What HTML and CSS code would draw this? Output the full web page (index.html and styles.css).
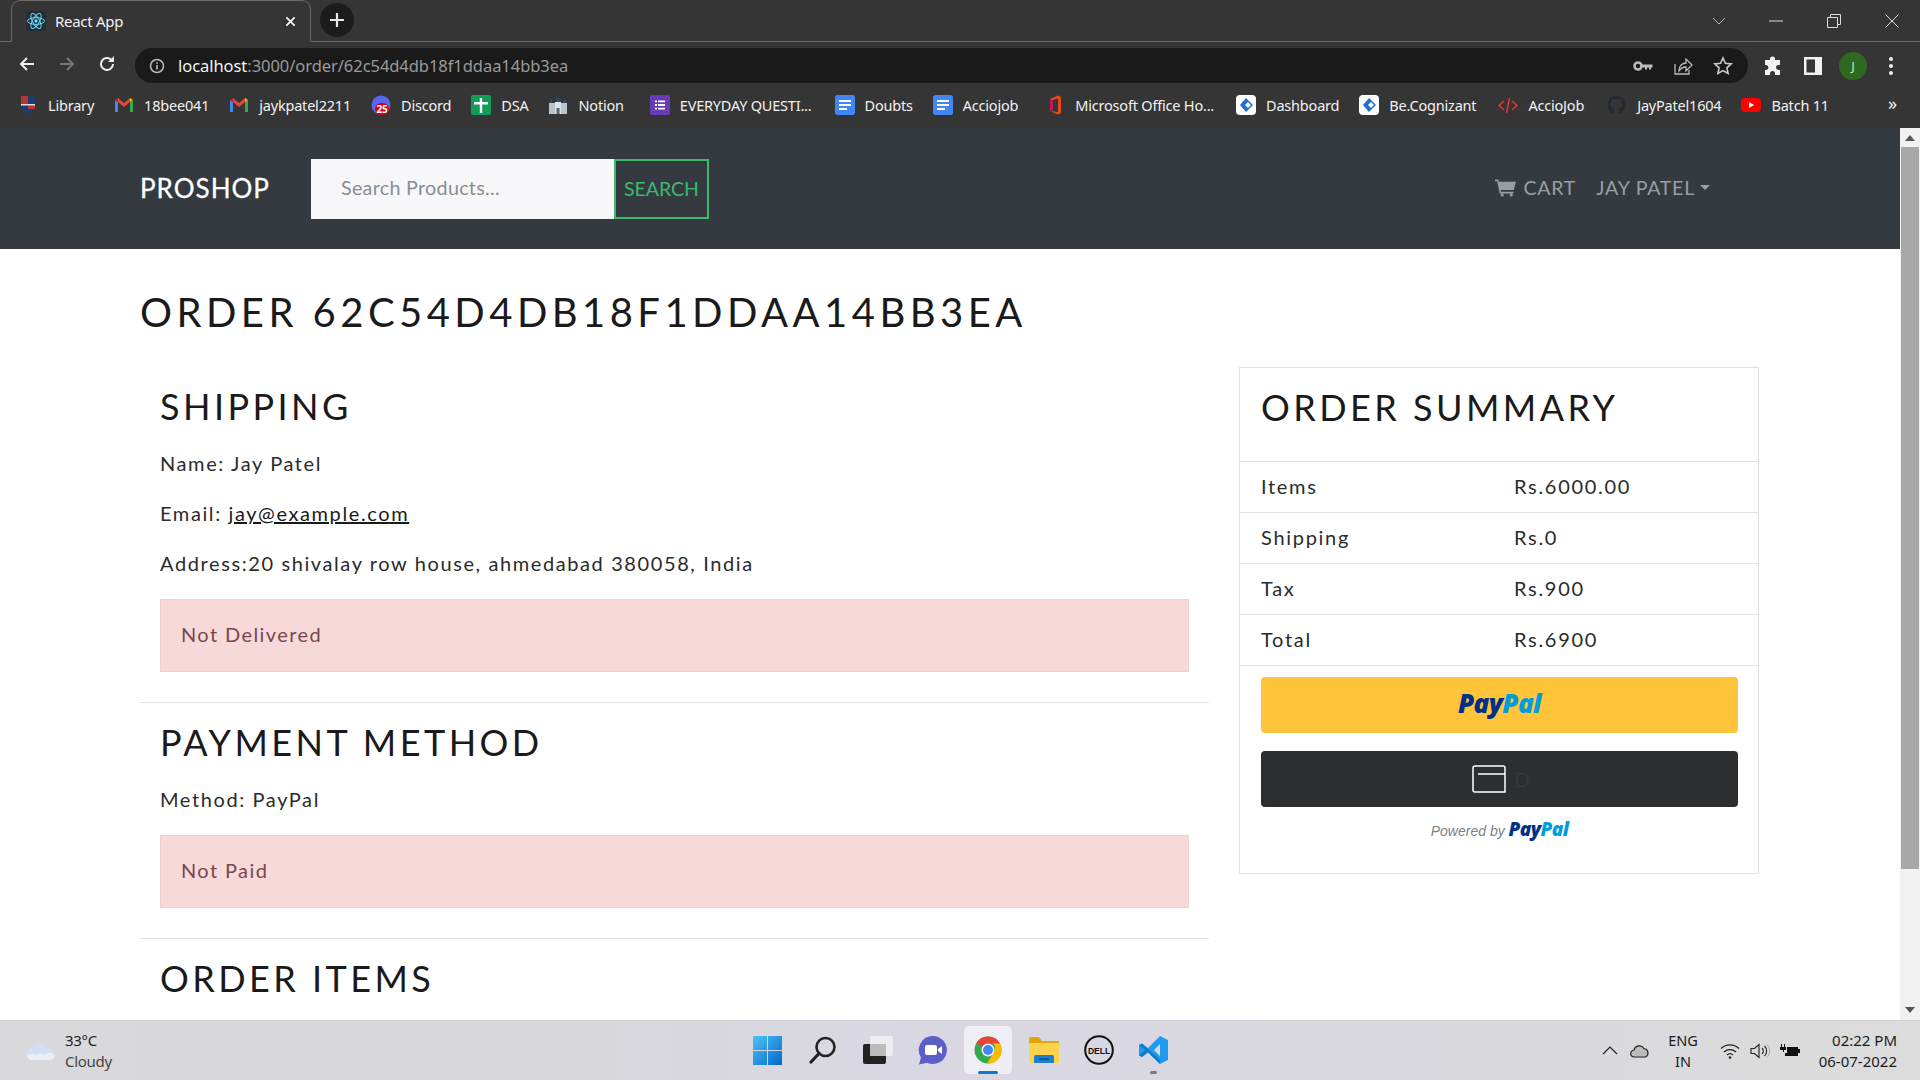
FILE: index.html
```html
<!DOCTYPE html>
<html lang="en">
<head>
<meta charset="utf-8">
<title>React App</title>
<link rel="stylesheet" href="styles.css">
</head>
<body>
<header class="chrome">
  <div class="tabstrip">
    <div class="tab">
      <svg class="fav" viewBox="0 0 20 20"><rect width="20" height="20" rx="3" fill="#282c34"/><g fill="none" stroke="#61dafb" stroke-width="1"><ellipse cx="10" cy="10" rx="8.5" ry="3.4"/><ellipse cx="10" cy="10" rx="8.5" ry="3.4" transform="rotate(60 10 10)"/><ellipse cx="10" cy="10" rx="8.5" ry="3.4" transform="rotate(120 10 10)"/></g><circle cx="10" cy="10" r="1.7" fill="#61dafb"/></svg>
      <span class="tabtitle">React App</span>
      <svg class="tabclose" viewBox="0 0 12 12"><path d="M1.5 1.5l9 9M10.5 1.5l-9 9" stroke="#fff" stroke-width="1.8"/></svg>
    </div>
    <div class="newtab"><svg viewBox="0 0 16 16" width="16" height="16"><path d="M8 1v14M1 8h14" stroke="#e8e8e8" stroke-width="2.2"/></svg></div>
    <div class="winbtns">
      <svg class="w1" viewBox="0 0 14 8" width="14" height="8"><path d="M1 1l6 6 6-6" fill="none" stroke="#bbb" stroke-width="1"/></svg>
      <svg class="w2" viewBox="0 0 14 2" width="14" height="2"><path d="M0 1h14" stroke="#ddd" stroke-width="1"/></svg>
      <svg class="w3" viewBox="0 0 14 14" width="14" height="14"><path d="M.5 3.5h10v10H.5zM3.5 3V.5h10v10H11" fill="none" stroke="#ddd" stroke-width="1"/></svg>
      <svg class="w4" viewBox="0 0 14 14" width="14" height="14"><path d="M.5.5l13 13M13.5.5l-13 13" stroke="#ddd" stroke-width="1"/></svg>
    </div>
  </div>
  <div class="toolbar">
    <svg class="nav-ic" viewBox="0 0 18 18"><path d="M16 9H3M9 3L3 9l6 6" fill="none" stroke="#eee" stroke-width="2"/></svg>
    <svg class="nav-ic" viewBox="0 0 18 18"><path d="M2 9h13M9 3l6 6-6 6" fill="none" stroke="#777" stroke-width="2"/></svg>
    <svg class="nav-ic" viewBox="0 0 18 18"><path d="M15 9a6 6 0 1 1-1.800-4.300" fill="none" stroke="#eee" stroke-width="2"/><path d="M16 1v6h-6z" fill="#eee"/></svg>
    <div class="omni">
      <svg class="info" viewBox="0 0 16 16"><circle cx="8" cy="8" r="6.500" fill="none" stroke="#bbb" stroke-width="1.500"/><path d="M8 7v4.500M8 4.300v1.500" stroke="#bbb" stroke-width="1.600"/></svg>
      <span class="url"><span class="host">localhost</span>:3000/order/62c54d4db18f1ddaa14bb3ea</span>
      <div class="omni-right">
        <svg viewBox="0 0 20 12" width="20" height="12"><circle cx="5" cy="6" r="3.500" fill="none" stroke="#bbb" stroke-width="2.600"/><path d="M8 4.500h11.500v3H18v2h-2v-2h-2v2h-2v-2H8z" fill="#bbb"/></svg>
        <svg viewBox="0 0 20 20" width="20" height="20"><path d="M2 8v10h14v-4" fill="none" stroke="#bbb" stroke-width="1.300"/><path d="M6 15c0-6 4-8 7-8V3l6 6-6 6v-4c-3 0-5 1-7 4z" fill="none" stroke="#bbb" stroke-width="1.300"/></svg>
        <svg viewBox="0 0 20 20" width="20" height="20"><path d="M10 2l2.400 5.300 5.800.6-4.300 3.900 1.200 5.700L10 14.600l-5.100 2.900 1.200-5.700-4.300-3.900 5.800-.6z" fill="none" stroke="#ccc" stroke-width="1.600"/></svg>
      </div>
    </div>
    <div class="tool-right">
      <svg viewBox="0 0 20 20" width="20" height="20"><path d="M7 3a2.500 2.500 0 0 1 5 0v1h5v5h-1.500a2.500 2.500 0 0 0 0 5H17v5h-5v-1.500a2.500 2.500 0 0 0-5 0V19H2v-5h1a2.500 2.500 0 0 0 0-5H2V4h5z" fill="#f2f2f2"/></svg>
      <svg viewBox="0 0 18 18" width="18" height="18"><path d="M0 0h18v18H0zM2.500 2.500v13H11v-13z" fill="#f2f2f2" fill-rule="evenodd"/></svg>
      <div class="avatar">J</div>
      <svg viewBox="0 0 6 20" width="6" height="20"><circle cx="3" cy="3" r="2" fill="#eee"/><circle cx="3" cy="10" r="2" fill="#eee"/><circle cx="3" cy="17" r="2" fill="#eee"/></svg>
    </div>
  </div>
  <nav class="bookmarks">
    <a class="bm b1"><svg viewBox="0 0 20 20"><path d="M3 1h14v13l-7 5.500L3 14z" fill="#1f3c6e"/><path d="M3 1h7v8H3z" fill="#b33"/><path d="M10 9h7v5H10z" fill="#b33"/><path d="M3 9h14v1.500H3z" fill="#ddd"/></svg>Library</a>
    <a class="bm b2"><svg class="gm" viewBox="0 0 20 16"><path d="M1 15V3l3 2v10z" fill="#4285f4"/><path d="M19 15V3l-3 2v10z" fill="#34a853"/><path d="M4 5l6 5 6-5V1l-6 5-6-5z" fill="#ea4335"/><path d="M1 3l3 2V1z" fill="#c5221f"/><path d="M19 3l-3 2V1z" fill="#fbbc04"/></svg>18bee041</a>
    <a class="bm b3"><svg class="gm" viewBox="0 0 20 16"><path d="M1 15V3l3 2v10z" fill="#4285f4"/><path d="M19 15V3l-3 2v10z" fill="#34a853"/><path d="M4 5l6 5 6-5V1l-6 5-6-5z" fill="#ea4335"/><path d="M1 3l3 2V1z" fill="#c5221f"/><path d="M19 3l-3 2V1z" fill="#fbbc04"/></svg>jaykpatel2211</a>
    <a class="bm b4"><svg viewBox="0 0 20 20"><circle cx="10" cy="10" r="9.500" fill="#5865f2"/><rect x="4" y="8" width="14" height="12" rx="6" fill="#d00"/><text x="11" y="18" class="badge25">25</text></svg>Discord</a>
    <a class="bm b5"><svg viewBox="0 0 20 20"><rect y="0" width="20" height="20" rx="2" fill="#0f9d58"/><path d="M3 7h14v2.500H3zM8.800 3h2.400v15H8.800z" fill="#fff"/></svg>DSA</a>
    <a class="bm b6"><svg viewBox="0 0 20 20"><path d="M1 8h18v11H1z" fill="#b8c4cc"/><path d="M7 7h6v12H7z" fill="#dde3e8"/><path d="M1 8l2-5 2 5zM15 8l2-5 2 5zM7 7l3-6 3 6z" fill="#2b4a6b"/><path d="M8.500 13h3v6h-3z" fill="#567"/></svg>Notion</a>
    <a class="bm b7"><svg viewBox="0 0 20 20"><rect width="20" height="20" rx="2" fill="#673ab7"/><path d="M8 5.500h7v1.800H8zM8 9.100h7v1.800H8zM8 12.700h7v1.800H8zM5 5.500h2v1.800H5zM5 9.100h2v1.800H5zM5 12.700h2v1.800H5z" fill="#fff"/></svg>EVERYDAY QUESTI...</a>
    <a class="bm b8"><svg viewBox="0 0 20 20"><rect width="20" height="20" rx="2.500" fill="#4285f4"/><path d="M4 5h12v2H4zM4 9h12v2H4zM4 13h8v2H4z" fill="#fff"/></svg>Doubts</a>
    <a class="bm b9"><svg viewBox="0 0 20 20"><rect width="20" height="20" rx="2.500" fill="#4285f4"/><path d="M4 5h12v2H4zM4 9h12v2H4zM4 13h8v2H4z" fill="#fff"/></svg>Acciojob</a>
    <a class="bm b10"><svg viewBox="0 0 20 20"><path d="M5 4l8-3.500 3 1.500v16l-3 1.500L5 16l8 1V3.500L8 5v9l-3 2z" fill="#e64a19"/><path d="M5 4l3 1v9l-3 2z" fill="#c2185b"/></svg>Microsoft Office Ho...</a>
    <a class="bm b11"><svg viewBox="0 0 20 20"><rect width="20" height="20" rx="4" fill="#fff"/><path d="M10 3l7 7-7 7-6-7z" fill="#1f6fd0"/><path d="M12 7l3 3-3 3-3-3z" fill="#fff"/></svg>Dashboard</a>
    <a class="bm b12"><svg viewBox="0 0 20 20"><rect width="20" height="20" rx="4" fill="#fff"/><path d="M10 3l7 7-7 7-6-7z" fill="#1f6fd0"/><path d="M12 7l3 3-3 3-3-3z" fill="#fff"/></svg>Be.Cognizant</a>
    <a class="bm b13"><svg viewBox="0 0 20 20"><path d="M6 6l-5 4.500L6 15M14 6l5 4.500-5 4.500M11.500 3l-3 15" fill="none" stroke="#e53935" stroke-width="1.500"/></svg>AccioJob</a>
    <a class="bm b14"><svg viewBox="0 0 20 20"><path d="M10 .5a9.500 9.500 0 0 0-3 18.500v-3.500c-2.500.5-3-1-3.500-2 1 0 1.500 1 2 1.500.8.800 1.500.5 1.800.2.100-.8.500-1.300.8-1.500-2.500-.3-4.500-1.300-4.500-5 0-1 .5-2 1-2.500-.1-.5-.3-1.500.1-2.500 1 0 2 .7 2.500 1a8 8 0 0 1 4.600 0c.5-.3 1.500-1 2.500-1 .4 1 .2 2 .1 2.500.6.500 1 1.500 1 2.500 0 3.700-2 4.700-4.500 5 .4.400.8 1 .8 2v3.300A9.500 9.500 0 0 0 10 .5z" fill="#24292f"/></svg>JayPatel1604</a>
    <a class="bm b15"><svg viewBox="0 0 20 20"><rect y="3" width="20" height="14" rx="4" fill="#f00"/><path d="M8 7l5 3-5 3z" fill="#fff"/></svg>Batch 11</a>
    <span class="more">»</span>
  </nav>
</header>

<div class="viewport">
  <div class="page">
    <div class="topnav">
      <div class="container navrow">
        <a class="brand">PROSHOP</a>
        <form class="searchform">
          <span class="searchinput">Search Products...</span>
          <span class="searchbtn">SEARCH</span>
        </form>
        <div class="navlinks">
          <span class="navlink"><svg class="carticon" viewBox="0 0 22 18"><path d="M0 0h3.500l.6 2.500H22l-2.300 8.500H6l.4 2h13v1.800H5L2.300 1.800H0z" fill="#9a9da1"/><circle cx="7.500" cy="16.300" r="1.700" fill="#9a9da1"/><circle cx="17" cy="16.300" r="1.700" fill="#9a9da1"/></svg>CART</span>
          <span class="navlink">JAY PATEL<i class="caret"></i></span>
        </div>
      </div>
    </div>
    <main class="container content">
      <h1 class="title">ORDER 62C54D4DB18F1DDAA14BB3EA</h1>
      <div class="grid">
        <section class="left">
          <div class="item">
            <h2>SHIPPING</h2>
            <p>Name: Jay Patel</p>
            <p>Email: <a class="mail">jay@example.com</a></p>
            <p>Address:20 shivalay row house, ahmedabad 380058, India</p>
            <div class="alert">Not Delivered</div>
          </div>
          <div class="item">
            <h2>PAYMENT METHOD</h2>
            <p>Method: PayPal</p>
            <div class="alert">Not Paid</div>
          </div>
          <div class="item">
            <h2>ORDER ITEMS</h2>
          </div>
        </section>
        <aside class="card">
          <h2 class="sumhead">ORDER SUMMARY</h2>
          <div class="sumrow"><span>Items</span><span>Rs.6000.00</span></div>
          <div class="sumrow"><span>Shipping</span><span>Rs.0</span></div>
          <div class="sumrow"><span>Tax</span><span>Rs.900</span></div>
          <div class="sumrow"><span>Total</span><span>Rs.6900</span></div>
          <div class="paybox">
            <div class="ppbtn yellow"><span class="pp pp-big"><b class="navy">Pay</b><b class="sky">Pal</b></span></div>
            <div class="ppbtn dark">
              <svg class="cardic" viewBox="0 0 34 28"><path d="M1 3a2 2 0 0 1 2-2h28a2 2 0 0 1 2 2v24H3a2 2 0 0 1-2-2z" fill="none" stroke="#fff" stroke-width="1.500"/><path d="M6 9h27" stroke="#fff" stroke-width="1.500"/></svg>
              <span class="ghost">D</span>
            </div>
            <div class="powered"><i>Powered by</i> <span class="pp pp-small"><b class="navy">Pay</b><b class="sky">Pal</b></span></div>
          </div>
        </aside>
      </div>
    </main>
  </div>
  <div class="scrollbar">
    <svg class="sarrow" viewBox="0 0 10 6"><path d="M5 0l5 6H0z" fill="#555"/></svg>
    <div class="thumb"></div>
    <svg class="sarrow dn" viewBox="0 0 10 6"><path d="M5 6l5-6H0z" fill="#555"/></svg>
  </div>
</div>

<footer class="taskbar">
  <div class="weather">
    <svg viewBox="0 0 30 22" width="30" height="22"><path d="M6 20a5.500 5.500 0 0 1-1-10.800A9 9 0 0 1 21 8a6.500 6.500 0 0 1 3 12z" fill="#cfe0f3"/><path d="M1 15a5 5 0 0 0 5 5h18a5.500 5.500 0 0 0 5-5c-3-3-8-3-11 0-3-2-5-2-8 0-3-1.500-6-1.500-9 0z" fill="#e8eef5"/></svg>
    <div class="wtext"><span class="temp">33°C</span><span class="cond">Cloudy</span></div>
  </div>
  <div class="tbicons">
    <span class="tb"><svg viewBox="0 0 29 29" width="29" height="29"><defs><linearGradient id="wg" x1="0" y1="0" x2="1" y2="1"><stop offset="0" stop-color="#4fc3f7"/><stop offset="1" stop-color="#0069c8"/></linearGradient></defs><path d="M0 0h14v14H0zM15 0h14v14H15zM0 15h14v14H0zM15 15h14v14H15z" fill="url(#wg)"/></svg></span>
    <span class="tb"><svg viewBox="0 0 28 28" width="28" height="28"><circle cx="16.500" cy="11" r="9" fill="none" stroke="#222" stroke-width="2.600"/><path d="M10 17.500L2 26" stroke="#222" stroke-width="3.200" stroke-linecap="round"/></svg></span>
    <span class="tb"><svg viewBox="0 0 30 28" width="30" height="28"><rect y="8" width="23" height="20" rx="2" fill="#222"/><rect x="7" y="0" width="23" height="20" rx="2" fill="#f2f0f4" opacity=".85"/><rect x="7" y="8" width="16" height="12" fill="#bbb"/></svg></span>
    <span class="tb"><svg viewBox="0 0 30 30" width="30" height="30"><path d="M15 1a14 14 0 1 1-6 26.700L1 29.500l2-7A14 14 0 0 1 15 1z" fill="#5b5fc7"/><rect x="7" y="10" width="12" height="10" rx="2" fill="#fff"/><path d="M20 14l4-3v8l-4-3z" fill="#fff"/></svg></span>
    <span class="tb active"><svg viewBox="0 0 28 28" width="28" height="28"><circle cx="14" cy="14" r="13.500" fill="#34a853"/><path d="M14 .5A13.500 13.500 0 0 1 26 7.500H14a6.500 6.500 0 0 0-6 4L2.500 6.500A13.500 13.500 0 0 1 14 .5z" fill="#ea4335"/><path d="M26 7.500A13.500 13.500 0 0 1 13 27.500l6-10a6.500 6.500 0 0 0 0-10z" fill="#fbbc04"/><circle cx="14" cy="14" r="6.500" fill="#fff"/><circle cx="14" cy="14" r="5" fill="#4285f4"/></svg><i class="runbar"></i></span>
    <span class="tb"><svg viewBox="0 0 30 26" width="30" height="26"><path d="M0 2a2 2 0 0 1 2-2h8l3 4h17v22H0z" fill="#e5a50a"/><path d="M0 6h30v20H0z" fill="#fdd34d"/><path d="M5 20a2 2 0 0 1 2-2h16a2 2 0 0 1 2 2v6H5z" fill="#1b7fd0"/><path d="M10 22h10" stroke="#0b4f8a" stroke-width="1.500"/></svg></span>
    <span class="tb"><svg viewBox="0 0 30 30" width="30" height="30"><circle cx="15" cy="15" r="13.800" fill="none" stroke="#111" stroke-width="2"/><text x="15" y="18.500" class="dell">DELL</text></svg></span>
    <span class="tb"><svg viewBox="0 0 30 30" width="30" height="30"><path d="M21 1l8 4v20l-8 4-12-11.500-6 4.500-3-1.500V10L3 8.500l6 4.500zM21 9l-6 6 6 6z" fill="#1f9cf0"/><path d="M0 10l3-1.500L21 25v4L9 17.500 3 22l-3-1.500L6 15z" fill="#0065a9" opacity=".55"/></svg><i class="rundot"></i></span>
  </div>
  <div class="tray">
    <svg class="tr-chev" viewBox="0 0 16 9" width="16" height="9"><path d="M1 8l7-7 7 7" fill="none" stroke="#222" stroke-width="1.200"/></svg>
    <svg class="tr-cloud" viewBox="0 0 20 14" width="20" height="14"><path d="M4.500 13a3.500 3.500 0 0 1-.5-7 5.500 5.500 0 0 1 10-1.500A4.500 4.500 0 0 1 15.500 13z" fill="#bbb" stroke="#222" stroke-width="1.200"/></svg>
    <div class="lang"><span>ENG</span><span>IN</span></div>
    <svg class="tr-wifi" viewBox="0 0 20 16" width="20" height="16"><path d="M1 5.500a13 13 0 0 1 18 0M4 9a9 9 0 0 1 12 0M7 12a4.500 4.500 0 0 1 6 0" fill="none" stroke="#222" stroke-width="1.300"/><circle cx="10" cy="14.500" r="1.300" fill="#222"/></svg>
    <svg class="tr-vol" viewBox="0 0 20 16" width="20" height="16"><path d="M1 5.500h3.500L9 1.500v13l-4.500-4H1z" fill="none" stroke="#222" stroke-width="1.100"/><path d="M12 5a4 4 0 0 1 0 6M14.500 3a7 7 0 0 1 0 10" fill="none" stroke="#222" stroke-width="1.100"/><path d="M17 1.500a9 9 0 0 1 0 13" fill="none" stroke="#aaa" stroke-width="1"/></svg>
    <svg class="tr-bat" viewBox="0 0 20 14" width="20" height="14"><path d="M1 0h1v3h2V0h1v3h1v3H4v2H3V6H0V3h1z" fill="#111"/><path d="M7 3h11v2h2v4h-2v3H5V9h2z" fill="#111"/></svg>
    <div class="clock"><span>02:22 PM</span><span>06-07-2022</span></div>
  </div>
</footer>
</body>
</html>
```

FILE: styles.css
```css
* { box-sizing: border-box; }
html, body { margin: 0; height: 100%; overflow: hidden; }
body { display: flex; flex-direction: column; width: 1920px; height: 1080px; font-family: Lato, "Open Sans", sans-serif; background: #fff; }

/* browser chrome */
.chrome { height: 128px; background: #353535; flex: none; font-family: "Noto Sans", "Open Sans", sans-serif; color: #f2f2f2; }
.tabstrip { height: 42px; display: flex; align-items: flex-end; position: relative; border-bottom: 1px solid #6a6a6a; }
.tab { width: 300px; height: 42px; margin-left: 11px; background: #353535; border: 1px solid #6a6a6a; border-bottom: 1px solid #353535; border-radius: 9px 9px 0 0; display: flex; align-items: center; padding: 0 12px 0 14px; margin-bottom: -1px; }
.fav { width: 20px; height: 20px; flex: none; }
.tabtitle { font-size: 15px; margin-left: 9px; flex: 1; letter-spacing: -.3px; }
.tabclose { width: 11px; height: 11px; margin-right: 2px; }
.newtab { width: 34px; height: 34px; border-radius: 50%; background: #1c1c1c; margin: 0 0 4px 9px; display: flex; align-items: center; justify-content: center; }
.winbtns { position: absolute; inset: 0 0 0 auto; width: 221px; display: flex; align-items: center; }
.w1 { margin-left: 13px; }
.w2 { margin-left: 43px; }
.w3 { margin-left: 44px; }
.w4 { margin-left: 44px; }
.toolbar { height: 41px; display: flex; align-items: center; padding: 0 0 0 18px; position: relative; }
.nav-ic { width: 18px; height: 18px; margin-right: 22px; margin-top: 2px; flex: none; }
.nav-ic:nth-of-type(3) { margin-right: 23px; }
.omni { width: 1613px; height: 35px; margin-top: 6px; border-radius: 18px; background: #1a1a1a; display: flex; align-items: center; padding: 0 15px 0 14px; margin-left: -4px; }
.info { width: 16px; height: 16px; flex: none; }
.url { margin-left: 13px; font-size: 16.500px; color: #9a9a9a; letter-spacing: -.05px; white-space: nowrap; }
.host { color: #f2f2f2; }
.omni-right { margin-left: auto; display: flex; align-items: center; gap: 20px; }
.tool-right { display: flex; align-items: center; margin-top: 6px; padding-left: 15px; gap: 21px; }
.avatar { width: 28px; height: 28px; margin-left: -4px; border-radius: 50%; background: #2d6a1f; color: #d0e6c6; font-size: 13px; display: flex; align-items: center; justify-content: center; }
.bookmarks { height: 45px; display: flex; align-items: center; position: relative; padding: 0 0 2px 18px; font-size: 14.500px; letter-spacing: -.2px; white-space: nowrap; }
.bm { display: flex; align-items: center; gap: 10px; margin-right: 20px; }
.bm svg { width: 20px; height: 20px; flex: none; }
.b6 { margin-right: 26px; }
.b7 { margin-right: 23px; }
.b9 { margin-right: 27px; }
.b10 { margin-right: 22px; }
.b12 { margin-right: 22px; }
.b13 { margin-right: 23px; }
.badge25 { font: 700 10px "Noto Sans", sans-serif; fill: #fff; text-anchor: middle; }
.more { position: absolute; right: 23px; top: 8px; font-size: 18px; }

/* scrolling viewport */
.viewport { flex: 1; min-height: 0; display: flex; overflow: hidden; }
.page { width: 1900px; flex: none; letter-spacing: 1px; color: #1a1a1a; }
.container { width: 1620px; margin-left: 140px; }
.topnav { height: 121px; background: #343a40; }
.navrow { height: 100%; display: flex; align-items: center; }
.brand { color: #fff; font-size: 26px; width: 130px; letter-spacing: 1px; font-weight: 400; margin-top: -2px; -webkit-text-stroke: .3px #fff; }
.searchform { display: flex; margin-left: 41px; height: 60px; }
.searchinput { width: 303px; background: #f7f7f9; color: #868e96; font-size: 19.700px; letter-spacing: .3px; padding: 0 0 3px 30px; display: flex; align-items: center; }
.searchbtn { width: 95px; border: 2px solid #3cba6c; color: #3cba6c; font-size: 19.500px; letter-spacing: 0; display: flex; align-items: center; justify-content: center; }
.navlinks { margin-left: auto; display: flex; gap: 20px; margin-right: 50px; }
.navlink { color: #9a9da1; font-size: 19.500px; letter-spacing: .8px; padding-bottom: 2px; display: flex; align-items: center; }
.carticon { width: 21px; height: 18px; margin-right: 7px; }
.caret { display: block; margin-left: 5px; border: 5px solid transparent; border-top-color: #9a9da1; border-bottom: 0; }

.content { padding-top: 0; }
.title { margin: 0; height: 118px; padding-top: 39px; font-size: 40px; line-height: 48px; font-weight: 400; letter-spacing: 4.450px; color: #1a1a1a; }
.grid { display: flex; align-items: flex-start; gap: 30px; margin-top: 0; }
.left { width: 1069px; flex: none; margin-top: 0; }
.item { padding: 16px 20px 30px; border-bottom: 1px solid #e6e6e6; }
.item:last-child { border: 0; }
h2 { margin: 0; font-size: 36px; line-height: 48px; font-weight: 400; letter-spacing: 3.450px; color: #1a1a1a; }
.item h2 { margin: -1px 0 18px; }
p { margin: 0 0 20px; font-size: 20px; line-height: 30px; color: #2b2b2b; letter-spacing: 1.600px; }
.mail { text-decoration: underline; color: #1a1a1a; }
.alert { height: 73px; margin-top: 21px; background: #f7d9da; border: 1px solid #f4cfd0; color: #7a474c; padding: 0 0 3px 20px; font-size: 20px; letter-spacing: 1.400px; display: flex; align-items: center; }
.card { width: 520px; height: 507px; flex: none; border: 1px solid #e1e1e1; }
.sumhead { height: 94px; padding: 15px 21px 0; border-bottom: 1px solid #e1e1e1; }
.sumrow { height: 51px; display: grid; grid-template-columns: 253px 1fr; align-items: center; padding: 0 21px 2px; border-bottom: 1px solid #e1e1e1; font-size: 20px; letter-spacing: 1.700px; color: #2b2b2b; }
.sumrow:nth-of-type(5) { height: 52px; }
.paybox { padding: 11px 20px 0 21px; }
.ppbtn { height: 56px; border-radius: 4px; display: flex; align-items: center; justify-content: center; }
.yellow { background: #ffc439; }
.yellow .pp { margin-top: -5px; }
.dark { background: #2c2e2f; margin-top: 18px; }
.pp { font-family: "Open Sans", "Liberation Sans", sans-serif; font-style: italic; font-weight: 800; letter-spacing: -.6px; }
.pp b { font-weight: 800; }
.pp-big { font-size: 26px; }
.pp-small { font-size: 19px; }
.navy { color: #003087; }
.sky { color: #009cde; }
.cardic { width: 34px; height: 28px; margin-left: 3px; }
.ghost { font-size: 20px; color: #36383a; margin-left: 8px; letter-spacing: 0; }
.powered { margin-top: 9px; text-align: center; font: 14px "Liberation Sans", Arial, sans-serif; letter-spacing: 0; color: #7b8188; }

.scrollbar { width: 20px; background: #f1f1f1; display: flex; flex-direction: column; align-items: center; padding-top: 7px; padding-bottom: 7px; }
.sarrow { width: 10px; height: 6px; flex: none; }
.thumb { width: 18px; height: 722px; background: #a8a8a8; margin-top: 6px; }
.dn { margin-top: auto; }

/* windows taskbar */
.taskbar { height: 60px; flex: none; position: relative; display: flex; align-items: center; background: linear-gradient(90deg, #d9d9db 0, #d8d8dc 30%, #dad7e3 50%, #d9d9de 75%, #dcdcdc 100%); border-top: 1px solid #cfcfd2; font-family: "Noto Sans", "Open Sans", sans-serif; color: #1c1c1c; }
.weather { display: flex; align-items: center; margin-left: 26px; gap: 9px; }
.wtext { display: flex; flex-direction: column; font-size: 15px; line-height: 21px; letter-spacing: -.3px; }
.cond { color: #444; }
.tbicons { position: absolute; left: 740px; top: 5px; display: flex; gap: 0; }
.tb { position: relative; width: 55px; height: 48px; display: flex; align-items: center; justify-content: center; }
.tb.active { background: #efeef4; border-radius: 5px; width: 48px; margin: 0 4px; }
.runbar { position: absolute; left: 14px; bottom: 0; width: 20px; height: 3px; border-radius: 2px; background: #0b78d4; }
.rundot { position: absolute; left: 24px; bottom: 0; width: 7px; height: 3px; border-radius: 2px; background: #7b7b7b; }
.tray { margin-left: auto; display: flex; align-items: center; padding-right: 23px; }
.tr-cloud { margin-left: 12px; }
.lang { margin-left: 19px; display: flex; flex-direction: column; align-items: center; font-size: 14.500px; line-height: 21px; width: 28px; }
.tr-wifi { margin-left: 23px; }
.tr-vol { margin-left: 10px; }
.tr-bat { margin-left: 10px; }
.clock { margin-left: 16px; width: 81px; display: flex; flex-direction: column; align-items: flex-end; font-size: 15px; line-height: 21px; white-space: nowrap; }
.dell { font: 700 8.500px "Liberation Sans", sans-serif; text-anchor: middle; fill: #111; }
```
